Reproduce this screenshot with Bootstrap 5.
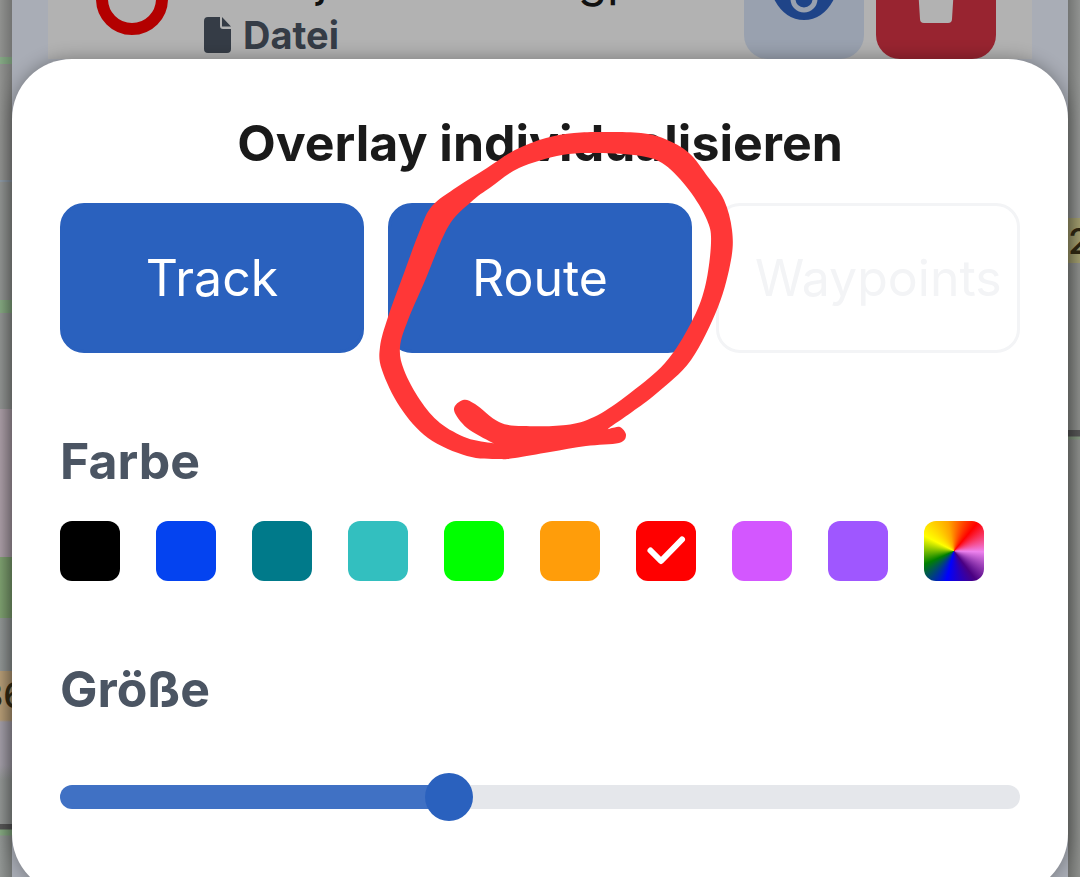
<!DOCTYPE html>
<html lang="de">
<head>
<meta charset="utf-8">
<meta name="viewport" content="width=device-width, initial-scale=1">
<title>Overlay individualisieren</title>
<link href="https://cdn.jsdelivr.net/npm/bootstrap@5.3.0/dist/css/bootstrap.min.css" rel="stylesheet">
<style>
  body { font-family: Inter, "Open Sans", sans-serif; background: #888a88; }
  .screen { min-height: 100vh; height: 100vh; }
  .map-rail { width: 12px; }
  .rail-left { background: linear-gradient(90deg, #0000, #0003), linear-gradient(#8f908e 57px, #83a783 57px 64px, #8f908e 64px 180px, #8b97a3 180px 182px, #8f9290 182px 300px, #83a67f 300px 313px, #8f9290 313px 409px, #a89ba4 409px 557px, #7c9e6e 557px 618px, #8f9493 618px 671px, #b39a74 671px 720px, #a09ba5 722px 765px, #909492 780px 824px, #555 824px 829px, #83a67f 830px 835px, #909492 836px); }
  .rail-right { background: linear-gradient(90deg, #0003, #0000), linear-gradient(#909290 218px, #9e9a6c 218px 263px, #8b8d8a 263px 430px, #555 430px 436px, #83967f 437px 439px, #8b8d8a 440px); }
  .map-label { font-size: 36px; line-height: 48px; font-weight: 500; color: #2c2510; }
  .label-left { top: 671px; right: -14px; }
  .label-right { top: 217px; left: 0; }
  .panel { background: #a9adb6; margin: 0; padding: 0 36px; }
  .entry { background: #b2b2b2; height: 120px; padding: 0 36px 0 48px; margin-top: -61px; box-sizing: content-box; }
  .entry-text { margin-left: 36px; padding-bottom: 4px; }
  .entry-name { font-size: 48px; line-height: 72px; color: #111; padding-left: 112px; gap: 250px; }
  .entry-kind { font-size: 38px; line-height: 40px; font-weight: 700; color: #353c46; gap: 12px; }
  .entry-actions { gap: 12px; }
  .entry-btn { width: 120px; height: 120px; border: 0; border-radius: 24px; }
  .btn-eye, .btn-eye:hover { background: #99a1af; }
  .btn-trash, .btn-trash:hover { background: #982430; }
  .sheet { margin: 59px 12px 0; padding: 48px 48px 73px; border-radius: 60px; box-shadow: 0 0 18px #0005; }
  .sheet-title, .group-title { font-size: 50px; line-height: 72px; font-weight: 700; margin: 0 0 24px; }
  .sheet-title { color: #1a1a1a; white-space: nowrap; }
  .group-title { color: #4b5563; float: none; }
  .choices { gap: 24px; }
  .choice { flex: 1 1 0; min-width: 0; }
  .choice .btn { height: 150px; border-radius: 24px; font-size: 50px; border: 3px solid #2a61be; background: #2a61be; color: #fff; }
  .choice .btn:disabled { border-color: #f3f4f6; background: #fff; color: #f3f4f6; opacity: 1; padding: 0 0 0 36px; text-align: left; white-space: nowrap; }
  .marker { left: -9px; top: -72px; z-index: 2; pointer-events: none; }
  .group { margin-top: 72px; }
  .swatches { gap: 36px; }
  .swatch { appearance: none; width: 60px; height: 60px; margin: 0; border-radius: 12px; background: var(--tone) center / 60px no-repeat; }
  .swatch:checked { background-image: url("data:image/svg+xml,%3Csvg xmlns='http://www.w3.org/2000/svg' viewBox='0 0 60 60'%3E%3Cpath d='M14.500 29.500l10.500 10.500 21-21.500' fill='none' stroke='white' stroke-width='6' stroke-linecap='round' stroke-linejoin='round'/%3E%3C/svg%3E"); }
  .swatch-any { background: conic-gradient(from 40deg, red, violet, indigo, blue, green, yellow, orange, red); }
  .size-range { height: 48px; margin-top: 48px; }
  .size-range::-webkit-slider-runnable-track { height: 24px; border-radius: 12px; background: linear-gradient(90deg, #4071c4 40%, #e5e7eb 40%); }
  .size-range::-webkit-slider-thumb { width: 48px; height: 48px; margin-top: -12px; border-radius: 50%; background: #2a61be; box-shadow: none; }
  .size-range::-moz-range-track { height: 24px; border-radius: 12px; background: linear-gradient(90deg, #4071c4 40%, #e5e7eb 40%); }
  .size-range::-moz-range-thumb { width: 48px; height: 48px; border-radius: 50%; background: #2a61be; }
</style>
</head>
<body>
<div class="screen position-relative overflow-hidden">
  <!-- map edges and the overlay list behind the sheet -->
  <div class="position-absolute top-0 start-0 w-100 h-100 d-flex overflow-hidden">
    <div class="map-rail rail-left position-relative overflow-hidden"><span class="map-label label-left position-absolute">36</span></div>
    <div class="panel flex-grow-1">
      <div class="entry d-flex align-items-center">
        <svg width="72" height="72" viewBox="0 0 72 72" aria-hidden="true"><circle cx="36" cy="36" r="30" fill="none" stroke="#b30000" stroke-width="12"/></svg>
        <div class="entry-text flex-grow-1 align-self-end">
          <div class="entry-name d-flex"><span>j</span><span>gp</span></div>
          <div class="entry-kind d-flex align-items-center">
            <svg width="27" height="36" viewBox="0 0 27 36" fill="currentColor" aria-hidden="true"><path d="M4 0h12v9q0 3 3 3h8v20q0 4-4 4H4q-4 0-4-4V4q0-4 4-4zM18 0l9 9.500h-9z"/></svg>
            <span>Datei</span>
          </div>
        </div>
        <div class="entry-actions d-flex">
          <button class="btn entry-btn btn-eye p-0" type="button" aria-label="Anzeigen">
            <svg width="62" height="42" viewBox="0 0 62 42" aria-hidden="true"><path d="M1 21Q12 0 31 0t30 21Q50 42 31 42T1 21z" fill="#1f4488"/><circle cx="31" cy="21" r="11" fill="none" stroke="#99a1af" stroke-width="5"/></svg>
          </button>
          <button class="btn entry-btn btn-trash p-0" type="button" aria-label="Löschen">
            <svg width="42" height="48" viewBox="0 0 42 48" fill="#b2b2b2" aria-hidden="true"><path d="M0 3h12l2-3h14l2 3h12v6H0zM3 12h36l-2 32q0 4-4 4H9q-4 0-4-4z"/></svg>
          </button>
        </div>
      </div>
    </div>
    <div class="map-rail rail-right position-relative overflow-hidden"><span class="map-label label-right position-absolute">2</span></div>
  </div>

  <main class="overflow-hidden">
    <form class="sheet bg-white position-relative">
      <h1 class="sheet-title text-center">Overlay individualisieren</h1>
      <div class="choices d-flex">
        <div class="choice"><button class="btn w-100" type="button">Track</button></div>
        <div class="choice position-relative">
          <button class="btn w-100" type="button">Route</button>
          <svg class="marker position-absolute" width="354" height="330" viewBox="379 131 354 330" aria-hidden="true"><path id="loop" fill="#ff3737" fill-rule="evenodd"/></svg>
        </div>
        <div class="choice"><button class="btn w-100" type="button" disabled>Waypoints</button></div>
      </div>
      <fieldset class="group">
        <legend class="group-title">Farbe</legend>
        <div class="swatches d-flex flex-wrap">
          <input class="swatch" type="radio" name="tone" aria-label="Schwarz" style="--tone:#000">
          <input class="swatch" type="radio" name="tone" aria-label="Blau" style="--tone:#0443f0">
          <input class="swatch" type="radio" name="tone" aria-label="Petrol" style="--tone:#007a8a">
          <input class="swatch" type="radio" name="tone" aria-label="Türkis" style="--tone:#33bfbf">
          <input class="swatch" type="radio" name="tone" aria-label="Grün" style="--tone:#00ff00">
          <input class="swatch" type="radio" name="tone" aria-label="Orange" style="--tone:#ff9d0a">
          <input class="swatch" type="radio" name="tone" aria-label="Rot" style="--tone:#ff0000" checked>
          <input class="swatch" type="radio" name="tone" aria-label="Pink" style="--tone:#d357ff">
          <input class="swatch" type="radio" name="tone" aria-label="Violett" style="--tone:#9f57ff">
          <input class="swatch swatch-any" type="radio" name="tone" aria-label="Eigene Farbe">
        </div>
      </fieldset>
      <div class="group">
        <label class="group-title d-block mb-0" for="size">Größe</label>
        <input class="form-range size-range d-block" id="size" type="range" min="0" max="100" value="40">
      </div>
    </form>
  </main>
</div>
<script src="https://cdn.jsdelivr.net/npm/bootstrap@5.3.0/dist/js/bootstrap.bundle.min.js"></script>
<script>
  // Hand-drawn loop: each run of points becomes a smooth closed outline.
  const runs = [
    [432,206,457,187,487,168,515,150,546,138,574,133,602,132,641,133,665,139,689,153,708,177,724,200,732,230,731,260,718,307,691,360,657,393,632,412,609,428,612,428,620,427,626,435,619,443,586,446,550,452,515,458,499,459,467,456,428,438,400,407,382,370,380,347,388,317,404,273,420,230],
    [471,202,491,187,519,168,562,155,598,153,641,156,665,165,689,190,707,220,711,243,705,287,691,323,665,363,625,397,594,417,566,425,523,426,499,422,475,404,463,400,454,410,467,428,491,442,492,443,467,438,440,423,420,400,404,370,400,347,408,320,424,283,448,227]
  ];
  document.getElementById('loop').setAttribute('d', runs.map(a => {
    const n = a.length / 2, p = i => [a[(i % n) * 2], a[(i % n) * 2 + 1]];
    let d = 'M' + p(0);
    for (let i = 0; i < n; i++) {
      const [q, s, e, f] = [p(i + n - 1), p(i), p(i + 1), p(i + 2)];
      d += 'C' + [s[0] + (e[0] - q[0]) / 6, s[1] + (e[1] - q[1]) / 6, e[0] - (f[0] - s[0]) / 6, e[1] - (f[1] - s[1]) / 6, ...e];
    }
    return d + 'Z';
  }).join(''));
</script>
</body>
</html>
